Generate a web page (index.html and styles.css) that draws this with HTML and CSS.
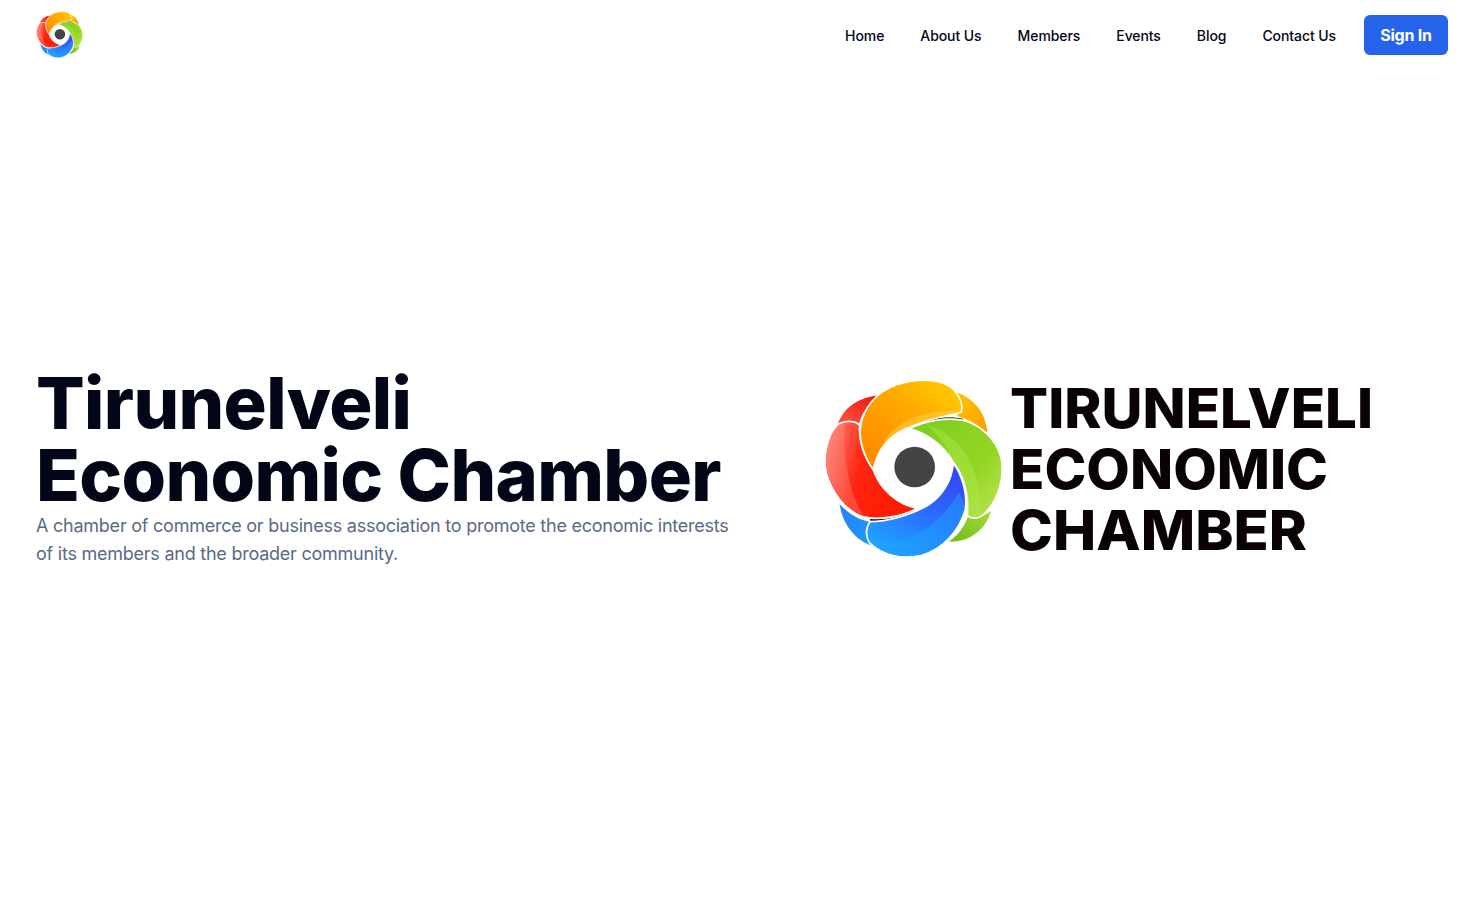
FILE: index.html
```html
<!DOCTYPE html>
<html lang="en">
<head>
<meta charset="utf-8">
<title>Tirunelveli Economic Chamber</title>
<link rel="stylesheet" href="styles.css">
</head>
<body>
<svg class="defs" width="0" height="0" aria-hidden="true">
  <defs>
    <linearGradient id="gOrange" x1="0.1" y1="0.9" x2="0.8" y2="0.1"><stop offset="0" stop-color="#ff8a00"/><stop offset="0.6" stop-color="#ffa600"/><stop offset="1" stop-color="#ffc400"/></linearGradient>
    <linearGradient id="gOrangeB" x1="0" y1="0" x2="1" y2="1"><stop offset="0" stop-color="#ffc400"/><stop offset="1" stop-color="#ff9d00"/></linearGradient>
    <linearGradient id="gGreen" x1="0" y1="0" x2="1" y2="0.8"><stop offset="0" stop-color="#7ccb1e"/><stop offset="0.7" stop-color="#93d624"/><stop offset="1" stop-color="#b4e24a"/></linearGradient>
    <linearGradient id="gGreenB" x1="1" y1="0" x2="0" y2="1"><stop offset="0" stop-color="#a6dc3a"/><stop offset="1" stop-color="#6dbb16"/></linearGradient>
    <linearGradient id="gBlue" x1="0.2" y1="1" x2="0.9" y2="0.1"><stop offset="0" stop-color="#1fa6ff"/><stop offset="0.55" stop-color="#2a6cff"/><stop offset="1" stop-color="#3547f2"/></linearGradient>
    <linearGradient id="gBlueB" x1="0" y1="0" x2="1" y2="1"><stop offset="0" stop-color="#2a7dff"/><stop offset="1" stop-color="#1a9cf5"/></linearGradient>
    <linearGradient id="gRed" x1="0" y1="0.2" x2="1" y2="0.5"><stop offset="0" stop-color="#ff8378"/><stop offset="0.42" stop-color="#ff2410"/><stop offset="1" stop-color="#ff1a00"/></linearGradient>
    <linearGradient id="gRedB" x1="0" y1="1" x2="1" y2="0"><stop offset="0" stop-color="#ff5a4a"/><stop offset="1" stop-color="#f01208"/></linearGradient>
    <symbol id="mark" viewBox="0 0 600 600">
      <path fill="url(#gRedB)" d="M66 168C82 125 112 86 190 76C158 105 140 130 133 160C110 148 88 150 66 168Z"/>
      <path fill="url(#gOrangeB)" d="M424 66C472 84 514 125 517 190C490 165 465 150 426 138C442 115 442 95 424 66Z"/>
      <path fill="url(#gGreenB)" d="M528 423C516 472 470 517 402 515C435 490 452 465 462 428C485 445 505 440 528 423Z"/>
      <path fill="url(#gBlueB)" d="M74 403C100 430 130 450 167 456C150 480 150 500 169 526C125 512 83 467 74 403Z"/>
      <path fill="#1f4d0c" d="M283 176C330 146 390 134 445 146L440 152C390 146 335 158 283 176Z"/>
      <path fill="#2a0a04" d="M165 447C215 452 265 438 307 415C265 448 205 460 165 452Z"/>
      <g stroke="#fff" stroke-width="5" stroke-linejoin="round">
        <path fill="url(#gOrange)" d="M175 300C150 265 130 215 137 168C145 118 180 66 245 44C310 24 385 24 417 60C436 82 445 105 439 127C400 135 340 147 285 170C225 190 185 240 175 300Z"/>
        <path fill="url(#gGreen)" d="M283 176C330 152 390 142 440 150C495 163 542 205 558 262C570 322 550 395 503 436C487 447 470 445 458 438C462 380 450 320 415 275C385 225 335 190 283 176Z"/>
        <path fill="url(#gBlue)" d="M415 280C445 320 458 380 450 420C432 482 387 535 320 556C262 570 200 556 163 518C150 497 153 470 165 455C215 455 290 435 340 405C380 380 410 335 415 280Z"/>
        <path fill="url(#gRed)" d="M307 415C260 440 190 452 143 440C92 423 50 367 34 310C21 248 42 188 70 162C95 150 120 153 134 165C130 210 145 260 175 300C195 360 250 405 307 415Z"/>
      </g>
      <path fill="#ffd23c" opacity=".55" d="M205 225C225 165 300 125 412 122C425 122 432 122 436 125C400 135 340 145 285 170C250 182 225 200 205 225Z"/>
      <path fill="#b2e64e" opacity=".45" d="M335 165C420 190 495 265 500 432C485 442 470 442 458 436C462 380 450 320 415 275C395 225 365 190 335 165Z"/>
      <path fill="#1ba4ff" opacity=".5" d="M190 522C270 520 375 470 430 368C452 395 450 415 448 420C430 480 385 530 320 552C265 565 225 550 190 522Z"/>
      <path fill="#ff9a8c" opacity=".3" d="M72 165C45 190 25 250 38 310C55 365 95 420 145 437C110 380 80 280 90 160C85 158 78 160 72 165Z"/>
      <circle cx="299" cy="291" r="61" fill="#444"/>
    </symbol>
  </defs>
</svg>
<header class="site-header">
  <a class="brand" href="#" aria-label="Tirunelveli Economic Chamber"><svg class="brand-mark"><use href="#mark"/></svg></a>
  <nav class="nav">
    <ul class="nav-list">
      <li><a class="nav-link" href="#">Home</a></li>
      <li><a class="nav-link" href="#">About Us</a></li>
      <li><a class="nav-link" href="#">Members</a></li>
      <li><a class="nav-link" href="#">Events</a></li>
      <li><a class="nav-link" href="#">Blog</a></li>
      <li><a class="nav-link" href="#">Contact Us</a></li>
    </ul>
    <a class="sign-in" href="#">Sign In</a>
  </nav>
</header>
<main class="hero">
  <section class="hero-copy">
    <h1 class="hero-title">Tirunelveli<br>Economic Chamber</h1>
    <p class="hero-text">A chamber of commerce or business association to promote the economic interests of its members and the broader community.</p>
  </section>
  <div class="hero-logo">
    <svg class="hero-mark"><use href="#mark"/></svg>
    <svg class="wordmark" viewBox="0 0 372 190">
      <text class="word" x="0" y="56" textLength="363" lengthAdjust="spacingAndGlyphs">TIRUNELVELI</text>
      <text class="word" x="0" y="117" textLength="318" lengthAdjust="spacingAndGlyphs">ECONOMIC</text>
      <text class="word" x="0" y="178" textLength="297" lengthAdjust="spacingAndGlyphs">CHAMBER</text>
    </svg>
  </div>
</main>
</body>
</html>
```
FILE: styles.css
```css
* { box-sizing: border-box; }
html, body { margin: 0; height: 100%; }
body {
  display: flex;
  flex-direction: column;
  background: #fff;
  font-family: Inter, "Liberation Sans", sans-serif;
  overflow: hidden;
}
.defs { display: block; height: 0; }
a { text-decoration: none; color: inherit; }
.site-header {
  display: flex;
  align-items: center;
  justify-content: space-between;
  height: 70px;
  padding: 0 36px 0 34px;
}
.brand { display: flex; }
.brand-mark { width: 52px; height: 52px; display: block; }
.nav { display: flex; align-items: center; gap: 28px; }
.nav-list { display: flex; gap: 36px; list-style: none; margin: 0; padding: 0; }
.nav-link { font-size: 14px; line-height: 20px; font-weight: 500; letter-spacing: -0.08px; color: #020617; }
.sign-in {
  display: flex;
  align-items: center;
  justify-content: center;
  width: 84px;
  height: 40px;
  border-radius: 6px;
  background: #2563eb;
  color: #fff;
  font-size: 16px;
  font-weight: 700;
  letter-spacing: -0.2px;
}
.hero {
  flex: 1;
  display: grid;
  grid-template-columns: 1fr 1fr;
  align-items: center;
  padding: 0 36px 46px;
}
.hero-title {
  margin: 0 0 1px;
  font-size: 72px;
  line-height: 72px;
  font-weight: 800;
  letter-spacing: -0.65px;
  color: #020617;
}
.hero-text {
  margin: 0 -4px 0 0;
  font-size: 18px;
  line-height: 28px;
  letter-spacing: -0.24px;
  color: #5a6a85;
}
.hero-logo { display: flex; align-items: center; justify-content: flex-end; padding-right: 66px; }
.hero-mark { width: 200px; height: 200px; margin-top: 6px; display: block; }
.wordmark { width: 372px; height: 190px; display: block; margin-left: -5px; }
.word {
  font-family: Inter, "Liberation Sans", sans-serif;
  font-size: 55px;
  font-weight: 800;
  fill: #0a0203;
}
```
